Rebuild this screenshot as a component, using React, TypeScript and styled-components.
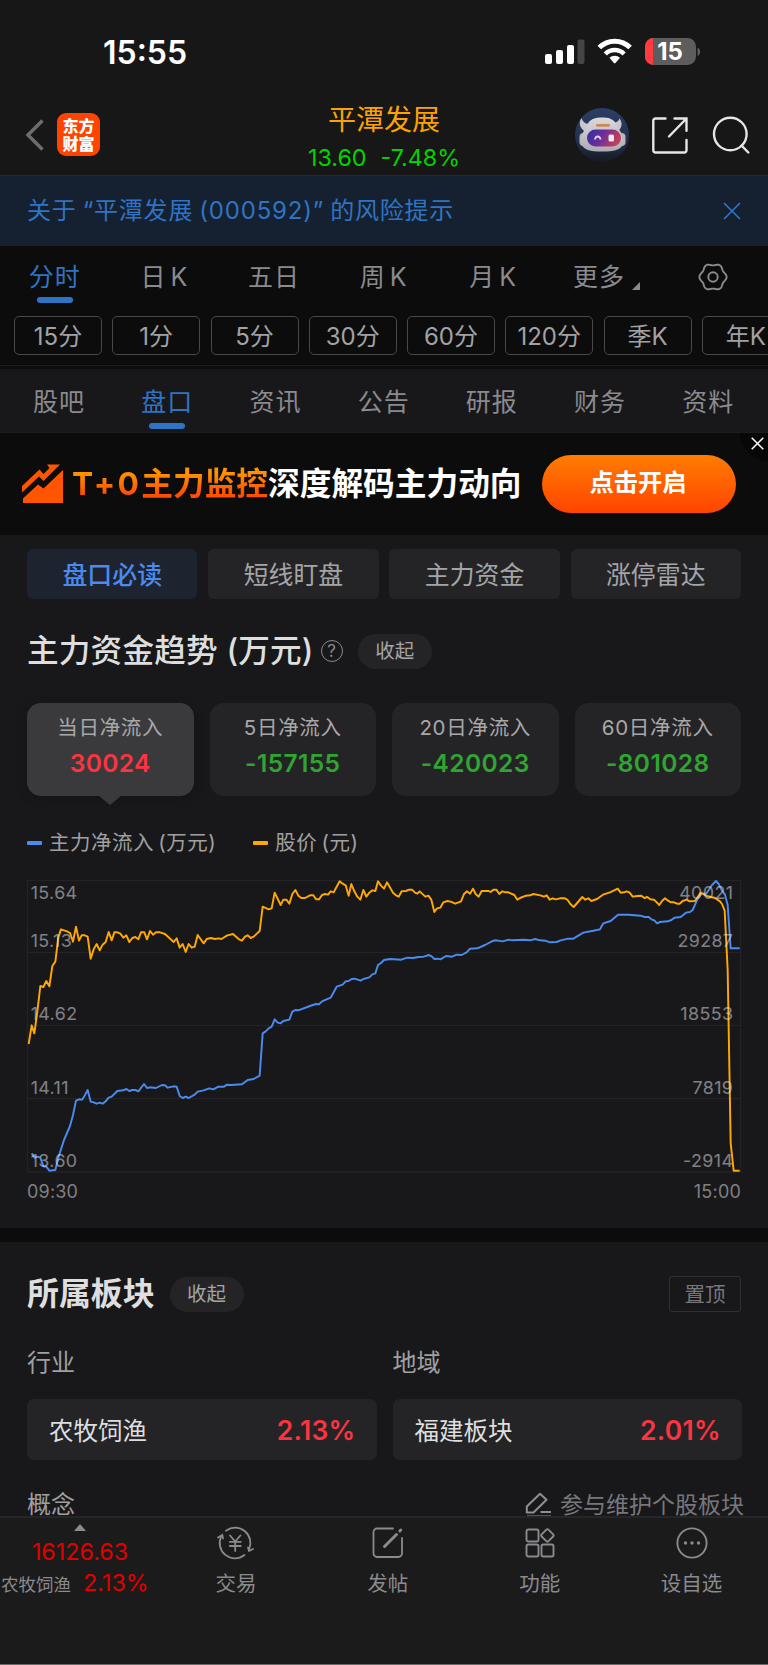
import React from 'react';
import styled, { createGlobalStyle } from 'styled-components';

const GlobalStyle = createGlobalStyle`
  * {
    box-sizing: border-box;
  }

  body {
    margin: 0;
    background: #0c0c0c;
    font-family: Inter, "Noto Sans CJK SC", sans-serif;
    -webkit-font-smoothing: antialiased;
  }
`;

const periods = ['分时', '日 K', '五日', '周 K', '月 K'];
const chips = ['15分', '1分', '5分', '30分', '60分', '120分', '季K', '年K'];
const navTabs = ['股吧', '盘口', '资讯', '公告', '研报', '财务', '资料'];
const segments = ['盘口必读', '短线盯盘', '主力资金', '涨停雷达'];

const flows = [
  { label: '当日净流入', value: '30024' },
  { label: '5日净流入', value: '-157155' },
  { label: '20日净流入', value: '-420023' },
  { label: '60日净流入', value: '-801028' },
];

const axis = [
  { y: 112, price: '15.64', flow: '40021' },
  { y: 257, price: '15.13', flow: '29287' },
  { y: 477, price: '14.62', flow: '18553' },
  { y: 697, price: '14.11', flow: '7819' },
  { y: 917, price: '13.60', flow: '-2914' },
];

// plot units are a third of a pixel
const pricePoints =
  '86,552 95,496 103,520 112,455 121,378 130,381 139,363 148,379 157,318 166,305 175,232 183,208 201,214 210,219 219,245 228,200 237,242 245,226 254,226 263,230 272,296 281,268 290,252 299,271 308,254 317,246 326,216 335,241 343,217 352,217 361,221 370,233 379,226 388,246 397,234 406,231 415,238 423,217 433,217 441,238 450,213 459,224 468,217 480,217 495,222 521,246 530,235 539,263 548,252 557,276 566,252 575,263 584,260 593,225 611,250 620,237 632,234 646,237 655,235 664,237 682,226 699,222 717,238 726,242 735,230 743,226 752,234 761,230 779,213 788,140 806,148 815,145 824,98 842,135 850,119 859,119 868,131 877,102 886,90 895,107 904,114 915,114 930,106 940,106 948,118 957,118 966,105 975,102 984,104 992,94 1001,97 1019,64 1028,71 1037,76 1046,107 1054,72 1063,94 1072,110 1081,119 1090,90 1099,110 1108,98 1117,91 1126,93 1134,64 1143,77 1152,86 1161,67 1179,98 1188,106 1196,110 1205,94 1218,93 1227,89 1236,89 1245,98 1252,101 1259,94 1276,110 1285,107 1294,119 1303,156 1311,145 1321,143 1330,127 1342,123 1352,125 1366,131 1383,124 1392,102 1401,94 1410,101 1419,86 1427,102 1436,110 1445,93 1466,93 1472,96 1480,89 1489,89 1498,102 1507,94 1516,97 1525,97 1543,105 1552,119 1560,114 1578,107 1591,106 1600,102 1621,106 1632,110 1640,106 1649,119 1658,115 1667,118 1680,115 1695,115 1703,120 1711,132 1721,141 1747,111 1756,119 1765,115 1774,123 1791,117 1809,104 1830,97 1853,86 1862,98 1873,97 1880,94 1889,98 1898,110 1912,108 1924,107 1933,114 1942,111 1951,118 1962,119 1978,135 1986,123 1995,115 2004,122 2013,127 2022,127 2031,131 2039,131 2048,123 2060,119 2069,124 2085,123 2102,98 2120,108 2145,114 2160,124 2166,132 2174,152 2183,330 2192,850 2201,932 2219,932';
const flowPoints =
  '95,880 104,893 112,890 121,893 130,919 139,920 148,932 166,930 175,893 192,840 210,798 219,765 228,722 237,718 246,719 254,707 263,690 272,725 281,727 290,731 299,728 308,731 317,724 326,713 335,710 352,693 370,691 379,687 388,693 397,690 406,690 415,694 432,672 441,684 450,682 468,684 486,675 495,676 503,683 521,679 530,680 539,708 548,714 557,710 566,714 584,704 593,695 611,691 628,685 640,688 655,680 672,680 681,674 693,675 726,673 743,660 761,657 779,647 788,520 797,514 806,505 815,500 824,478 833,488 842,490 850,483 868,479 877,455 886,450 895,451 930,438 948,432 957,433 966,424 992,413 1010,380 1028,374 1037,364 1046,363 1055,357 1064,356 1082,362 1090,357 1108,352 1117,343 1126,340 1134,315 1143,309 1152,300 1170,297 1204,299 1222,293 1240,294 1254,291 1271,290 1286,285 1295,289 1303,297 1313,296 1321,298 1338,288 1356,290 1370,284 1385,285 1400,277 1410,266 1432,265 1455,255 1480,242 1489,241 1508,244 1526,239 1536,241 1572,239 1590,241 1606,237 1620,241 1636,242 1650,247 1670,246 1682,241 1704,236 1720,236 1750,218 1776,213 1800,208 1810,190 1832,183 1854,164 1886,164 1922,167 1934,171 1946,171 1954,178 1963,181 1971,190 1980,186 2004,184 2014,180 2024,173 2042,171 2058,158 2070,156 2078,150 2092,118 2105,100 2118,102 2136,75 2148,63 2156,72 2164,88 2175,104 2183,135 2192,265 2219,265';

// settings gear: a circle with six soft lobes
const gearPath = (() => {
  const pts: string[] = [];
  for (let i = 0; i < 120; i++) {
    const t = (i / 120) * Math.PI * 2;
    const r = 12.6 + 1 * Math.cos(6 * t);
    pts.push(`${(15 + r * Math.cos(t)).toFixed(2)} ${(15 + r * Math.sin(t)).toFixed(2)}`);
  }
  return `M${pts.join('L')}Z`;
})();

const StatusIcons: React.FC = () => (
  <svg width="156" height="28" viewBox="0 0 156 28">
    <rect x="0" y="16" width="7" height="10" rx="2" fill="#fff" />
    <rect x="11" y="12" width="7" height="14" rx="2" fill="#fff" />
    <rect x="22" y="7" width="7" height="19" rx="2" fill="#fff" />
    <rect x="32.5" y="1.5" width="7" height="24.5" rx="2" fill="#454545" />
    <g fill="none" stroke="#fff" strokeWidth="5">
      <path d="M54.3 9.5a21.8 21.8 0 0 1 30.8 0" />
      <path d="M60.3 16a13.2 13.2 0 0 1 18.8 0" strokeWidth="4.6" />
    </g>
    <path d="M64.4 19.8a7.6 7.6 0 0 1 10.6 0l-4.5 5.1a1.1 1.1 0 0 1-1.6 0z" fill="#fff" />
    <clipPath id="cell">
      <rect x="100" y="0" width="51" height="27" rx="8.5" />
    </clipPath>
    <g clipPath="url(#cell)">
      <rect x="100" y="0" width="51" height="27" fill="#5d5d5d" />
      <rect x="100" y="0" width="8" height="27" fill="#ff3b3f" />
    </g>
    <path d="M152.5 9.5c3.6 1.6 3.6 6.8 0 8.4z" fill="#5d5d5d" />
    <text x="125" y="22" fill="#fff" fontFamily="Inter" fontSize="24" fontWeight="700" textAnchor="middle">15</text>
  </svg>
);

const BackIcon: React.FC = () => (
  <svg width="18" height="34" viewBox="0 0 18 34" fill="none" stroke="#6d6d6d" strokeWidth="3.4">
    <path d="M16.5 2.5 2 17 16.5 31.5" />
  </svg>
);

const RobotAvatar: React.FC = () => (
  <svg width="54" height="54" viewBox="0 0 54 54">
    <defs>
      <linearGradient id="sky" x1="0" y1="0" x2="0" y2="1">
        <stop offset="0" stopColor="#2c3e66" />
        <stop offset="0.6" stopColor="#25314c" />
        <stop offset="1" stopColor="#161a24" />
      </linearGradient>
      <linearGradient id="visor" x1="0" y1="0" x2="1" y2="0.3">
        <stop offset="0" stopColor="#2f2fa0" />
        <stop offset="0.5" stopColor="#6a2d9c" />
        <stop offset="1" stopColor="#c0405c" />
      </linearGradient>
      <linearGradient id="shell" x1="0" y1="0" x2="0" y2="1">
        <stop offset="0" stopColor="#dcd9dd" />
        <stop offset="1" stopColor="#aeaab4" />
      </linearGradient>
    </defs>
    <circle cx="27" cy="27" r="27" fill="url(#sky)" />
    <path d="M6.5 10C3 15 5 21 11 24l6-9c-5 2-9 0-10.5-5zM44.5 10.5C48 15 47 20 42.5 23.5l-6-9c4 1 7-1 8-4z" fill="#c9c6cf" />
    <g fill="#b9b5c0">
      <rect x="4.5" y="25" width="8" height="13" rx="4" />
      <rect x="42.5" y="25" width="8" height="13" rx="4" />
    </g>
    <path d="M27 9.5c-9-.5-14 3-16 10.5-4 5-6 10-5 15 2 7 9 8.5 21 8.5s19-1.500 21-7.500c1-6-1-11-5-16C41 12 35 9 27 9.500z" fill="url(#shell)" />
    <rect x="21" y="16" width="14" height="2.8" rx="1.4" fill="#c98a55" />
    <rect x="12" y="21.5" width="34" height="17" rx="8.5" fill="url(#visor)" />
    <path d="M20 31.5c.5-4 5-4 5.5 0" fill="none" stroke="#dcd4f4" strokeWidth="1.8" />
    <rect x="33.5" y="26.5" width="5.5" height="7" rx="1.5" fill="#f0e4ee" />
  </svg>
);

const ShareIcon: React.FC = () => (
  <svg width="36" height="37" viewBox="0 0 36 37" fill="none" stroke="#e6e6e6" strokeWidth="2.4" strokeLinecap="round">
    <path d="M13.5 1.5h-10a2.200 2.200 0 0 0-2.200 2.200v29.600a2.200 2.200 0 0 0 2.200 2.200h28.800a2.200 2.200 0 0 0 2.200-2.200V23" />
    <path d="M22.5 1.5h12v12.300M34 2 17 19.500" />
  </svg>
);

const SearchIcon: React.FC = () => (
  <svg width="38" height="38" viewBox="0 0 38 38" fill="none" stroke="#e6e6e6" strokeWidth="2.4" strokeLinecap="round">
    <circle cx="18.3" cy="18" r="16.3" />
    <path d="m29.5 29.5 6.800 7" />
  </svg>
);

const CloseIcon: React.FC<{ size: number }> = ({ size }) => (
  <svg width={size} height={size} viewBox="0 0 18 18" fill="none" stroke="currentColor" strokeWidth={size < 16 ? 2.1 : 1.7}>
    <path d="m1 1 16 16M17 1 1 17" />
  </svg>
);

const TrendIcon: React.FC = () => (
  <svg width="42" height="40" viewBox="0 0 42 40" fill="#ff5500">
    <path d="M0 22 17.5 5.5 21.5 10 27.5 4 25 .5H38L21.5 17 17 12.5 0 28.5z" />
    <path d="M1 34.5 16 20.5 21.5 24.5 41 6v33H1z" />
  </svg>
);

const TradeIcon: React.FC = () => (
  <svg width="37" height="34" viewBox="0 0 37 34" fill="none" stroke="#8a8a8f" strokeWidth="1.8" strokeLinecap="round">
    <path d="M9 4.700A15.300 15.300 0 0 1 32.200 23M27.500 29A15.300 15.300 0 0 1 4.300 10.200" />
    <path d="M1 11.500 5.300 9l.7 3.500M31 21.500l1 3.500 4-2" />
    <path d="m13 9.500 5.200 6 5.200-6M18.200 15.500V25M12.800 15.800h11M12.800 20h11" />
  </svg>
);

const PostIcon: React.FC = () => (
  <svg width="34" height="34" viewBox="0 0 34 34" fill="none" stroke="#8a8a8f" strokeWidth="1.8" strokeLinecap="round">
    <path d="M22 2.500H6a3.500 3.500 0 0 0-3.500 3.500v21.500A3.500 3.500 0 0 0 6 31h21.500a3.500 3.500 0 0 0 3.500-3.500V12" />
    <path d="M13.500 20.500 25.500 8.500M28.800 5l1-1" strokeWidth="3" />
  </svg>
);

const FeatureIcon: React.FC = () => (
  <svg width="30" height="30" viewBox="0 0 30 30" fill="none" stroke="#8a8a8f" strokeWidth="1.9">
    <rect x="1.5" y="1.5" width="12" height="12" rx="1.8" />
    <rect x="1.5" y="16.5" width="12" height="12" rx="1.8" />
    <rect x="16.5" y="16.5" width="12" height="12" rx="1.8" />
    <rect x="17.6" y="2.6" width="9.6" height="9.6" rx="1.5" transform="rotate(45 22.4 7.4)" />
  </svg>
);

const MoreIcon: React.FC = () => (
  <svg width="32" height="32" viewBox="0 0 32 32" fill="none" stroke="#8a8a8f" strokeWidth="1.9">
    <circle cx="16" cy="16" r="14.6" />
    <g fill="#8a8a8f" stroke="none">
      <circle cx="9.5" cy="16" r="1.7" />
      <circle cx="16" cy="16" r="1.7" />
      <circle cx="22.5" cy="16" r="1.7" />
    </g>
  </svg>
);

const EditIcon: React.FC = () => (
  <svg width="27" height="26" viewBox="0 0 27 26" fill="none" stroke="#8f8f91" strokeWidth="2" strokeLinejoin="round">
    <path d="M1.800 20.500v-6L15 1.800l6.500 6L8.500 20.500zM15.500 20H26M2 24.500h24" />
  </svg>
);

const actions = [
  { label: '交易', icon: <TradeIcon /> },
  { label: '发帖', icon: <PostIcon /> },
  { label: '功能', icon: <FeatureIcon /> },
  { label: '设自选', icon: <MoreIcon /> },
];

const App: React.FC = () => {
  return (
    <Screen>
      <GlobalStyle />
      <Header>
        <StatusBar>
          <Clock>15:55</Clock>
          <StatusIcons />
        </StatusBar>
        <TitleBar>
          <HeaderLeft>
            <BackIcon />
            <Logo>
              <span>东方</span>
              <span>财富</span>
            </Logo>
          </HeaderLeft>
          <StockTitle>
            <StockName>平潭发展</StockName>
            <StockQuote>
              <span>13.60</span>
              <span>-7.48%</span>
            </StockQuote>
          </StockTitle>
          <HeaderRight>
            <RobotAvatar />
            <ShareIcon />
            <SearchIcon />
          </HeaderRight>
        </TitleBar>
      </Header>

      <RiskNotice>
        <NoticeText>关于 “平潭发展 (000592)” 的风险提示</NoticeText>
        <CloseIcon size={18} />
      </RiskNotice>

      <PeriodTabs>
        {periods.map((p, i) => (
          <PeriodTab key={p} $active={i === 0}>{p}</PeriodTab>
        ))}
        <MoreTab>
          更多
          <Corner />
        </MoreTab>
        <GearCell>
          <svg width="30" height="30" viewBox="0 0 30 30" fill="none" stroke="#8a8a8f" strokeWidth="1.9">
            <path d={gearPath} />
            <circle cx="15" cy="15" r="4.7" />
          </svg>
        </GearCell>
      </PeriodTabs>
      <ChipRow>
        {chips.map((c) => (
          <Chip key={c}>{c}</Chip>
        ))}
      </ChipRow>

      <NavTabs>
        {navTabs.map((t, i) => (
          <NavTab key={t} $active={i === 1}>{t}</NavTab>
        ))}
      </NavTabs>

      <Banner>
        <TrendIcon />
        <BannerText>
          <em><i>T+0</i>主力监控</em>深度解码主力动向
        </BannerText>
        <BannerButton>点击开启</BannerButton>
        <BannerClose>
          <CloseIcon size={13} />
        </BannerClose>
      </Banner>

      <TrendPanel>
        <SegmentRow>
          {segments.map((s, i) => (
            <Segment key={s} $active={i === 0}>{s}</Segment>
          ))}
        </SegmentRow>
        <SectionHead>
          <SectionTitle>主力资金趋势 (万元)</SectionTitle>
          <HelpMark>?</HelpMark>
          <Pill>收起</Pill>
        </SectionHead>
        <FlowRow>
          {flows.map((f, i) => (
            <FlowCard key={f.label} $active={i === 0}>
              <FlowLabel>{f.label}</FlowLabel>
              <FlowValue $up={!f.value.startsWith('-')}>{f.value}</FlowValue>
            </FlowCard>
          ))}
        </FlowRow>
        <Legend>
          <LegendItem $color="#4b8bf0">主力净流入 (万元)</LegendItem>
          <LegendItem $color="#ffa800">股价 (元)</LegendItem>
        </Legend>
        <Chart viewBox="81 60 2142 876">
          <g stroke="#262629" strokeWidth="3" fill="none">
            <path d="M82 61H2222V936H82ZM82 277H2222M82 496H2222M82 716H2222" />
          </g>
          <g fill="none" strokeWidth="5.8" strokeLinejoin="round">
            <polyline points={flowPoints} stroke="#4b8bf0" />
            <polyline points={pricePoints} stroke="#ffa800" />
          </g>
          {axis.map((a) => (
            <React.Fragment key={a.y}>
              <text x="92" y={a.y + 4}>{a.price}</text>
              <text x="2200" y={a.y + 4} textAnchor="end">{a.flow}</text>
            </React.Fragment>
          ))}
        </Chart>
        <TimeAxis>
          <span>09:30</span>
          <span>15:00</span>
        </TimeAxis>
      </TrendPanel>

      <SectorPanel>
        <SectionHead>
          <SectionTitle $bold>所属板块</SectionTitle>
          <Pill>收起</Pill>
          <PinButton>置顶</PinButton>
        </SectionHead>
        <SectorGrid>
          <SectorLabel>行业</SectorLabel>
          <SectorLabel>地域</SectorLabel>
          <SectorCard>
            农牧饲渔<b>2.13%</b>
          </SectorCard>
          <SectorCard>
            福建板块<b>2.01%</b>
          </SectorCard>
        </SectorGrid>
        <ConceptRow>
          <span>概念</span>
          <Maintain>
            <EditIcon />
            参与维护个股板块
          </Maintain>
        </ConceptRow>
      </SectorPanel>

      <BottomBar>
        <IndexCell>
          <UpMark />
          <IndexValue>16126.63</IndexValue>
          <IndexName>
            农牧饲渔<b>2.13%</b>
          </IndexName>
        </IndexCell>
        {actions.map((a) => (
          <Action key={a.label}>
            <ActionIcon>{a.icon}</ActionIcon>
            {a.label}
          </Action>
        ))}
      </BottomBar>
    </Screen>
  );
};

const Screen = styled.div`
  display: flex;
  flex-direction: column;
  width: 768px;
  height: 1665px;
  overflow: hidden;
  background: #0c0c0c;
  white-space: nowrap;
`;

/* Header */
const Header = styled.header`
  height: 176px;
  background: #171717;
  border-bottom: 1px solid #2a2a2b;
`;

const StatusBar = styled.div`
  display: flex;
  justify-content: space-between;
  align-items: center;
  height: 104px;
  padding: 0 67px 0 103px;
`;

const Clock = styled.span`
  padding-top: 2px;
  color: #fff;
  font-size: 32px;
  font-weight: 600;
  line-height: 40px;
`;

const TitleBar = styled.div`
  display: grid;
  grid-template-columns: 1fr auto 1fr;
  align-items: start;
  height: 71px;
`;

const HeaderLeft = styled.div`
  display: flex;
  align-items: center;
  gap: 13px;
  padding: 9px 0 0 26px;
`;

const Logo = styled.div`
  display: flex;
  flex-direction: column;
  align-items: center;
  justify-content: center;
  width: 43px;
  height: 43px;
  border-radius: 9px;
  background: #ff4400;
  color: #fff;
  font-size: 16px;
  font-weight: 900;
  line-height: 18px;
`;

const StockTitle = styled.div`
  display: flex;
  flex-direction: column;
  align-items: center;
`;

const StockName = styled.div`
  color: #ffa200;
  font-size: 28px;
  line-height: 33px;
`;

const StockQuote = styled.div`
  display: flex;
  gap: 14px;
  color: #00d400;
  font-size: 23.3px;
  line-height: 42px;
`;

const HeaderRight = styled.div`
  display: flex;
  align-items: center;
  justify-content: flex-end;
  gap: 23px;
  padding: 4px 19px 0 0;
  margin-right: -1px;

  svg:last-child {
    margin-left: 1px;
  }
`;

const RiskNotice = styled.div`
  display: flex;
  align-items: center;
  justify-content: space-between;
  height: 70px;
  padding: 0 27px;
  background: #152130;
  color: #2f74c4;
`;

const NoticeText = styled.span`
  font-size: 24px;
  letter-spacing: 0.8px;
  word-spacing: -1.5px;
  line-height: 34px;
`;

/* Quote period tabs */
const PeriodTabs = styled.div`
  display: grid;
  grid-template-columns: repeat(5, 109.6px) 119px 1fr;
  height: 60px;
  color: #8a8a8f;
  font-size: 25px;
  letter-spacing: 1px;
  word-spacing: -4px;
  line-height: 62px;
  text-align: center;
`;

const tabUnderline = `
  content: "";
  position: absolute;
  left: calc(50% - 18px);
  width: 36px;
  height: 6px;
  border-radius: 3px;
  background: #2f74c4;
`;

const PeriodTab = styled.div<{ $active?: boolean }>`
  position: relative;
  height: 60px;
  color: ${(p) => (p.$active ? '#2f74c4' : 'inherit')};

  &::after {
    ${(p) => (p.$active ? tabUnderline : '')}
    bottom: 3px;
  }
`;

const MoreTab = styled.div`
  display: flex;
  align-items: center;
  gap: 7px;
  padding-left: 25px;
`;

const Corner = styled.i`
  margin-top: 18px;
  border-left: 8px solid transparent;
  border-bottom: 8px solid #8a8a8f;
`;

const GearCell = styled.div`
  display: flex;
  align-items: center;
  padding-left: 31px;
`;

const ChipRow = styled.div`
  display: flex;
  gap: 10.25px;
  height: 60px;
  padding: 10px 0 0 14px;
  border-bottom: 1px solid #1c1c1d;
`;

const Chip = styled.div`
  flex: 0 0 88px;
  height: 39px;
  border: 1px solid #48484a;
  border-radius: 5px;
  color: #a2a2a4;
  font-size: 24px;
  line-height: 39px;
  text-align: center;
`;

/* Content tabs */
const NavTabs = styled.div`
  display: grid;
  grid-template-columns: repeat(7, 108.2px);
  height: 64px;
  margin-top: 3px;
  padding-left: 5px;
  background: #18181a;
  border-bottom: 1px solid #1d1d1f;
  color: #8a8a8f;
  font-size: 25px;
  letter-spacing: 1px;
  line-height: 66px;
  text-align: center;
`;

const NavTab = styled(PeriodTab)`
  height: 63px;
`;

const Banner = styled.div`
  position: relative;
  display: flex;
  align-items: center;
  height: 102px;
  padding-left: 22px;
`;

const BannerText = styled.div`
  margin-left: 8px;
  padding-bottom: 6px;
  color: #fff;
  font-size: 31.7px;
  font-weight: 700;

  em {
    font-style: normal;
    background: linear-gradient(#ff9000 25%, #ff5000 75%);
    -webkit-background-clip: text;
    color: transparent;
  }

  i {
    font-style: normal;
    letter-spacing: 2.3px;
  }
`;

const BannerButton = styled.div`
  width: 194px;
  height: 58px;
  margin-left: auto;
  margin-right: 32px;
  border-radius: 29px;
  background: linear-gradient(#ff7d00, #ff4400);
  color: #fff;
  font-size: 24.3px;
  font-weight: 700;
  line-height: 55px;
  text-align: center;
  text-indent: -2px;
`;

const BannerClose = styled.div`
  position: absolute;
  top: 0;
  right: 0;
  display: flex;
  justify-content: flex-end;
  width: 28px;
  height: 28px;
  padding: 4px 4px 0 0;
  border-bottom-left-radius: 28px;
  background: #070707;
  color: #fff;
`;

/* Fund trend panel */
const TrendPanel = styled.section`
  height: 693px;
  padding: 14px 27px 0;
  background: #18181a;
`;

const SegmentRow = styled.div`
  display: grid;
  grid-template-columns: repeat(4, 1fr);
  gap: 10.7px;
`;

const Segment = styled.div<{ $active: boolean }>`
  height: 50px;
  border-radius: 6px;
  background: ${(p) => (p.$active ? '#1d232f' : '#242426')};
  color: ${(p) => (p.$active ? '#4b8bf0' : '#a5a5a7')};
  font-size: 24.9px;
  font-weight: ${(p) => (p.$active ? 500 : 400)};
  line-height: 53px;
  text-align: center;
`;

const SectionHead = styled.div`
  display: flex;
  align-items: center;
  height: 72px;
  padding-top: 32px;
`;

const SectionTitle = styled.h2<{ $bold?: boolean }>`
  margin: 0 ${(p) => (p.$bold ? 15 : 7)}px 0 0;
  color: #dededf;
  font-size: ${(p) => (p.$bold ? 31.9 : 31.6)}px;
  letter-spacing: ${(p) => (p.$bold ? 0 : 0.2)}px;
  font-weight: ${(p) => (p.$bold ? 700 : 500)};
  line-height: 40px;
`;

const HelpMark = styled.span`
  width: 22px;
  height: 22px;
  margin-right: 15px;
  border: 1.5px solid #8a8a8c;
  border-radius: 50%;
  color: #8a8a8c;
  font-size: 17px;
  line-height: 20px;
  text-align: center;
`;

const Pill = styled.span`
  width: 74px;
  height: 35px;
  border-radius: 18px;
  background: #242426;
  color: #a5a5a7;
  font-size: 19.5px;
  line-height: 35px;
  text-align: center;
`;

const FlowRow = styled.div`
  display: grid;
  grid-template-columns: repeat(4, 1fr);
  gap: 16px;
  margin-top: 32px;
`;

const FlowCard = styled.div<{ $active: boolean }>`
  position: relative;
  height: 93px;
  padding-top: 6px;
  border-radius: 14px;
  background: ${(p) => (p.$active ? '#3a3a3c' : '#242426')};
  box-shadow: ${(p) => (p.$active ? '0 2px 12px rgba(0, 0, 0, 0.2)' : 'none')};
  text-align: center;

  &::after {
    content: ${(p) => (p.$active ? '""' : 'none')};
    position: absolute;
    top: 100%;
    left: calc(50% - 11px);
    border: 11px solid transparent;
    border-top: 9px solid #3a3a3c;
    border-bottom: 0;
  }
`;

const FlowLabel = styled.div`
  color: #a8a8aa;
  font-size: 20.5px;
  letter-spacing: 0.7px;
  line-height: 37px;
`;

const FlowValue = styled.div<{ $up: boolean }>`
  color: ${(p) => (p.$up ? '#fc3441' : '#30a532')};
  font-size: 24.5px;
  font-weight: 600;
  letter-spacing: 0.4px;
  line-height: 34px;
`;

const Legend = styled.div`
  display: flex;
  gap: 37px;
  margin-top: 29px;
  color: #a0a0a2;
  font-size: 20.5px;
  letter-spacing: 0.5px;
  word-spacing: -2px;
  line-height: 36px;
`;

const LegendItem = styled.span<{ $color: string }>`
  display: flex;
  align-items: center;
  gap: 7.5px;

  &::before {
    content: "";
    width: 14.5px;
    height: 4px;
    border-radius: 1px;
    background: ${(p) => p.$color};
  }
`;

const Chart = styled.svg`
  display: block;
  width: 714px;
  height: 292px;
  margin-top: 19px;
  overflow: visible;

  text {
    fill: rgba(235, 235, 240, 0.5);
    font-size: 53.5px;
    letter-spacing: 1.2px;
  }
`;

const TimeAxis = styled.div`
  display: flex;
  justify-content: space-between;
  margin-top: 4px;
  color: #808082;
  font-size: 18px;
  letter-spacing: 0.2px;
  line-height: 31px;
`;

/* Sector panel */
const SectorPanel = styled.section`
  height: 274px;
  margin-top: 14px;
  padding: 0 26px 0 27px;
  overflow: hidden;
  background: #18181a;
`;

const PinButton = styled.span`
  width: 72px;
  height: 36px;
  margin-left: auto;
  margin-right: 1px;
  border: 1px solid #303033;
  border-radius: 3px;
  color: #77777a;
  font-size: 20.5px;
  line-height: 35px;
  text-align: center;
`;

const SectorGrid = styled.div`
  display: grid;
  grid-template-columns: 1fr 1fr;
  column-gap: 16px;
  margin-top: 29px;
`;

const SectorLabel = styled.div`
  color: #a0a0a2;
  font-size: 24px;
  line-height: 40px;
`;

const SectorCard = styled.div`
  display: flex;
  align-items: center;
  justify-content: space-between;
  height: 61px;
  margin-top: 16px;
  padding: 0 21px 0 22px;
  border-radius: 7px;
  background: #242426;
  color: #dededf;
  font-size: 24.5px;

  b {
    color: #fc3441;
    font-size: 26.5px;
    font-weight: 600;
    letter-spacing: 0.3px;
  }
`;

const ConceptRow = styled.div`
  display: flex;
  justify-content: space-between;
  align-items: center;
  height: 22px;
  margin-top: 34px;
  color: #a0a0a2;
  font-size: 24px;
  line-height: 22px;
`;

const Maintain = styled.div`
  display: flex;
  align-items: center;
  gap: 8px;
  margin-right: -2px;
  color: #77777a;
  font-size: 23px;
`;

/* Bottom bar */
const BottomBar = styled.footer`
  display: grid;
  grid-template-columns: 160px repeat(4, 151.9px);
  height: 149px;
  background: #1b1b1b;
  border-top: 2px solid #262628;
  border-bottom: 1px solid #6a6a6a;
  color: #8a8a8f;
`;

const IndexCell = styled.div`
  display: flex;
  flex-direction: column;
  align-items: center;
`;

const UpMark = styled.i`
  margin-top: 6px;
  border: 6px solid transparent;
  border-top: 0;
  border-bottom: 7px solid #8a8a8f;
`;

const IndexValue = styled.div`
  margin-top: 5px;
  color: #e00000;
  font-size: 23.3px;
  line-height: 32px;
`;

const IndexName = styled.div`
  align-self: flex-start;
  padding-left: 1px;
  font-size: 17.5px;
  line-height: 30px;

  b {
    margin-left: 12px;
    color: #e00000;
    font-size: 23.3px;
    font-weight: 400;
  }
`;

const Action = styled.div`
  display: flex;
  flex-direction: column;
  align-items: center;
  font-size: 20.5px;
  line-height: 32px;
`;

const ActionIcon = styled.span`
  display: flex;
  align-items: center;
  height: 50px;
`;

export default App;
